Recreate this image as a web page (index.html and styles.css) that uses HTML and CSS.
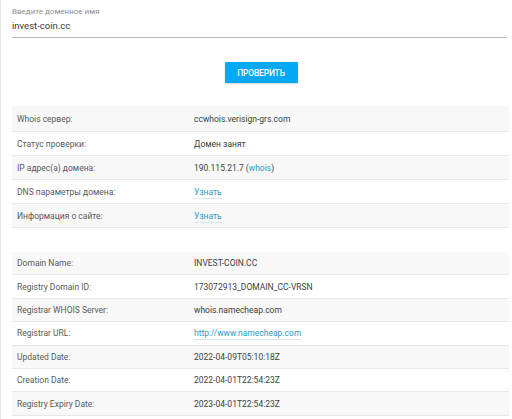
FILE: index.html
```html
<!DOCTYPE html>
<html lang="ru">
<head>
<meta charset="utf-8">
<link rel="stylesheet" href="styles.css">
</head>
<body>
<div class="card">
  <div class="field">
    <div class="field-label">Введите доменное имя</div>
    <div class="field-input">invest-coin.cc</div>
  </div>
  <div class="actions">
    <button class="btn">ПРОВЕРИТЬ</button>
  </div>
  <div class="table">
    <div class="row"><div class="k">Whois сервер:</div><div class="v">ccwhois.verisign-grs.com</div></div>
    <div class="row"><div class="k">Статус проверки:</div><div class="v">Домен занят</div></div>
    <div class="row"><div class="k">IP адрес(а) домена:</div><div class="v">190.115.21.7 (<span class="link">whois</span>)</div></div>
    <div class="row"><div class="k">DNS параметры домена:</div><div class="v"><span class="link dashed">Узнать</span></div></div>
    <div class="row"><div class="k">Информация о сайте:</div><div class="v"><span class="link dashed">Узнать</span></div></div>
  </div>
  <div class="table second">
    <div class="row"><div class="k">Domain Name:</div><div class="v">INVEST-COIN.CC</div></div>
    <div class="row"><div class="k">Registry Domain ID:</div><div class="v">173072913_DOMAIN_CC-VRSN</div></div>
    <div class="row"><div class="k">Registrar WHOIS Server:</div><div class="v">whois.namecheap.com</div></div>
    <div class="row"><div class="k">Registrar URL:</div><div class="v"><span class="link dashed">http://www.namecheap.com</span></div></div>
    <div class="row"><div class="k">Updated Date:</div><div class="v">2022-04-09T05:10:18Z</div></div>
    <div class="row"><div class="k">Creation Date:</div><div class="v">2022-04-01T22:54:23Z</div></div>
    <div class="row"><div class="k">Registry Expiry Date:</div><div class="v">2023-04-01T22:54:23Z</div></div>
    <div class="row filler"></div>
  </div>
</div>
</body>
</html>
```

FILE: styles.css
```css
html, body {
  margin: 0;
  padding: 0;
  background: #f2f2f2;
  height: 100%;
  overflow: hidden;
}
body {
  font-family: Roboto, "Noto Sans", "DejaVu Sans", sans-serif;
  color: #333;
}
.card {
  width: 497px;
  min-height: 100%;
  background: #fff;
  border-left: 1px solid #e6e6e6;
  border-right: 1px solid #dcdcdc;
  padding: 6px 8px 0 11px;
  box-sizing: content-box;
}
.field {
  margin-right: 2px;
}
.field-label {
  font-size: 8px;
  line-height: 11px;
  color: #8e8e8e;
}
.field-input {
  font-size: 9.5px;
  line-height: 12px;
  color: #3a3a3a;
  margin-top: 3px;
  padding-bottom: 5px;
  border-bottom: 1px solid #bdbdbd;
}
.actions {
  display: flex;
  justify-content: center;
  padding-top: 24px;
  padding-bottom: 23px;
}
.btn {
  width: 73px;
  height: 21px;
  border: 0;
  border-radius: 1px;
  background: #03a9f4;
  color: #fff;
  font-family: Roboto, sans-serif;
  font-weight: 500;
  font-size: 8.5px;
  letter-spacing: -0.2px;
  box-shadow: 0 1px 2px rgba(0,0,0,0.18);
  padding: 0;
  margin-left: 1px;
}
.table {
  display: flex;
  flex-direction: column;
  font-size: 8.5px;
}
.second {
  margin-top: 24px;
}
.row {
  display: grid;
  grid-template-columns: 177px 1fr;
  height: 23px;
  align-items: center;
  border-bottom: 1px solid #e8e8e8;
}
.second .row {
  height: 22.4px;
}
.row:nth-child(odd) {
  background: #f8f8f8;
}
.table:not(.second) .row:first-child {
  height: 25px;
}
.k {
  padding-left: 5px;
  color: #5a5a5a;
}
.v {
  color: #404040;
  padding-left: 5px;
}
.link {
  color: #2b9bc9;
}
.dashed {
  border-bottom: 1px solid #d7e6ee;
  padding-bottom: 1px;
}
```
